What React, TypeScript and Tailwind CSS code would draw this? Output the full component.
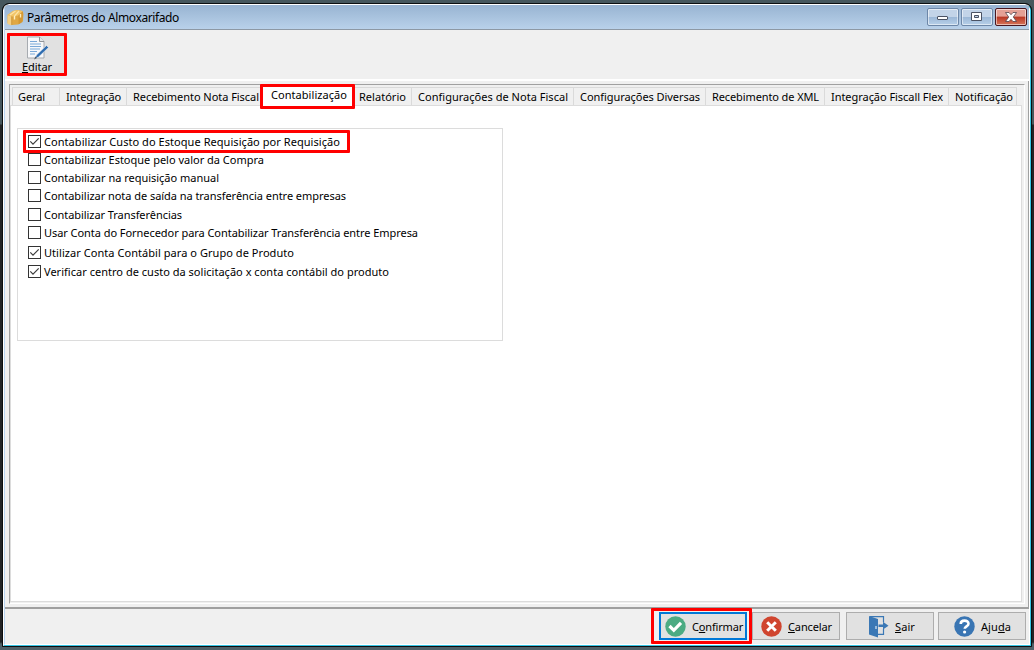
import React from "react";

type Tab = { label: string; box: string; text: string; active?: boolean };

const tabs: Tab[] = [
  { label: "Geral", box: "w-[48px] border-l pl-[5px]", text: "w-[27px]" },
  { label: "Integração", box: "w-[67px] pl-[6px]", text: "w-[55px]" },
  { label: "Recebimento Nota Fiscal", box: "w-[134px] pl-[6px]", text: "w-[126px]" },
  { label: "Contabilização", box: "w-[95px] pl-[8px]", text: "w-[76px]", active: true },
  { label: "Relatório", box: "w-[58px] pl-[5px]", text: "w-[47px]" },
  { label: "Configurações de Nota Fiscal", box: "w-[162px] pl-[6px]", text: "w-[150px]" },
  { label: "Configurações Diversas", box: "w-[132px] pl-[6px]", text: "w-[120px]" },
  { label: "Recebimento de XML", box: "w-[119px] pl-[6px]", text: "w-[107px]" },
  { label: "Integração Fiscall Flex", box: "w-[124px] pl-[6px]", text: "w-[112px]" },
  { label: "Notificação", box: "w-[68px] pl-[6px]", text: "w-[58px]" },
];

const options = [
  { label: "Contabilizar Custo do Estoque Requisição por Requisição", on: true, row: "h-[18px]", text: "w-[296px]" },
  { label: "Contabilizar Estoque pelo valor da Compra", on: false, row: "h-[18px]", text: "w-[220px]" },
  { label: "Contabilizar na requisição manual", on: false, row: "h-[18px]", text: "w-[175px]" },
  { label: "Contabilizar nota de saída na transferência entre empresas", on: false, row: "h-[19px]", text: "w-[302px]" },
  { label: "Contabilizar Transferências", on: false, row: "h-[18px]", text: "w-[138px]" },
  { label: "Usar Conta do Fornecedor para Contabilizar Transferência entre Empresa", on: false, row: "h-[20px]", text: "w-[374px]" },
  { label: "Utilizar Conta Contábil para o Grupo de Produto", on: true, row: "h-[19px]", text: "w-[250px]" },
  { label: "Verificar centro de custo da solicitação x conta contábil do produto", on: true, row: "h-[18px]", text: "w-[345px]" },
];

/* Label whose letter spacing is adjusted so that it fills the width of its box. */
function Fit({ children, className }: { children: React.ReactNode; className: string }) {
  const ref = React.useRef<HTMLSpanElement>(null);
  const [spacing, setSpacing] = React.useState(0);
  React.useLayoutEffect(() => {
    const el = ref.current;
    if (!el || !el.parentElement) return;
    const natural = el.getBoundingClientRect().width;
    const count = (el.textContent || "").length;
    setSpacing((el.parentElement.clientWidth - natural) / count);
  }, []);
  return (
    <span className={`block shrink-0 text-left whitespace-nowrap ${className}`}>
      <span ref={ref} className="inline-block" style={{ letterSpacing: `${spacing}px` }}>
        {children}
      </span>
    </span>
  );
}

function BoxIcon() {
  return (
    <svg className="h-[17px] w-[17px] shrink-0" viewBox="0 0 17 17">
      <path d="M.5 6 6 2l4-1 5.500 1 1 3-.5 7-5 3.500-6 .5-4.500-2Z" fill="#e0a844" />
      <path d="M.5 6 6 2l4-1 5.500 1-4 4.500L5 7.500Z" fill="#f2c467" />
      <path d="m.5 6 4 1.500v9L.5 15Z" fill="#f5cf82" />
      <path d="m11.500 6.500 4.500-4-.5 10.500-4 2.500Z" fill="#d39733" />
      <path d="m3 6 5.500-4M7.500 7 12 2" fill="none" stroke="#fbe3a6" strokeWidth="1.200" />
      <path d="M7.500 7v3.500M13.500 5v3.500" stroke="#fff0c0" strokeWidth="1.400" />
      <path d="M4.700 7.500V16" stroke="#c08a30" strokeWidth=".6" />
    </svg>
  );
}

function EditIcon() {
  return (
    <svg className="h-[24px] w-[24px] shrink-0" viewBox="0 0 24 24">
      <path d="M2.500 1h12l4.500 4.500v16.500H2.500Z" fill="#f7f8fa" stroke="#a7abb0" />
      <path d="M14.500 1v4.500h4.500" fill="#e4e7ea" stroke="#8f9499" />
      <path d="M5 5.500h7M5 8h11M5 10.500h11M5 13h10M5 15.500h7M5 18h5" stroke="#7aa9d8" strokeWidth="1.200" />
      <path d="m10 22.500 1.500-3.500 10-9.500 2 2-10 9.500Z" fill="#2f6db0" stroke="#f2f5f8" strokeWidth=".5" />
      <path d="m9 23.500 1.500-3 1.500 1.500Z" fill="#44525f" />
    </svg>
  );
}

function CheckBox({ on }: { on: boolean }) {
  return (
    <span className="flex h-[13px] w-[13px] shrink-0 border border-[#333] bg-white">
      {on && (
        <svg className="h-[11px] w-[11px]" viewBox="0 0 11 11">
          <path d="m1.300 5.300 2.700 2.800 5.700-5.700" fill="none" stroke="#3b3b3b" strokeWidth="1.200" />
        </svg>
      )}
    </span>
  );
}

function ConfirmIcon() {
  return (
    <svg className="h-[21px] w-[21px] shrink-0" viewBox="0 0 21 21">
      <circle cx="10.500" cy="10.500" r="10.200" fill="#4bab83" />
      <path d="m4.500 10 4.300 4.300 7.200-7.500" fill="none" stroke="#fff" strokeWidth="3.200" />
    </svg>
  );
}

function CancelIcon() {
  return (
    <svg className="h-[21px] w-[21px] shrink-0" viewBox="0 0 21 21">
      <circle cx="10.500" cy="10.500" r="10.200" fill="#d0452f" />
      <path d="m6.200 6.200 8.600 8.600m0-8.600-8.600 8.600" fill="none" stroke="#fff" strokeWidth="3" />
    </svg>
  );
}

function ExitIcon() {
  return (
    <svg className="h-[23px] w-[21px] shrink-0" viewBox="0 0 21 23">
      <path d="M2 1.700h13.500V7M15.500 14v5.300H10" fill="none" stroke="#3b78b5" strokeWidth="1.200" />
      <path d="m1 1 9 3v18.500L1 19.500Z" fill="#3b78b5" />
      <path d="M8 11v3" stroke="#fff" strokeWidth="1" />
      <path d="M10.500 9.500H15V6.800l5.500 3.900-5.500 3.900v-2.700h-4.500Z" fill="#3b78b5" />
    </svg>
  );
}

function HelpIcon() {
  return (
    <svg className="h-[21px] w-[21px] shrink-0" viewBox="0 0 21 21">
      <circle cx="10.500" cy="10.500" r="10.200" fill="#3975b3" />
      <path d="M6.700 8c0-4.500 7.800-4.300 7.800-.3 0 2.600-3.800 2.700-3.800 5" fill="none" stroke="#fff" strokeWidth="2.600" />
      <circle cx="10.600" cy="16" r="1.600" fill="#fff" />
    </svg>
  );
}

const caption = "flex h-[18px] w-[32px] items-center justify-center rounded-[2px] border shadow-[inset_0_0_0_1px_#ffffff88]";
const button = "mt-[3px] flex h-[28px] w-[88px] shrink-0 items-center border border-[#adadad] bg-[#e1e1e1]";

export default function App() {
  return (
    <div className="h-[650px] w-[1034px] overflow-hidden bg-[linear-gradient(#46575d_0px,#46575d_124px,#222426_125px,#222426_642px,#4f6068_644px)] pt-[3px] pl-[2px] font-['Noto_Sans',sans-serif] text-[11px] leading-[14px] text-black">
      <div className="h-[644px] w-[1030px] overflow-hidden rounded-t-[7px] border border-[#0c0f10] bg-[#0c0f10]">
        <div className="h-[642px] w-[1028px] overflow-hidden rounded-t-[6px] border border-t-white border-r-[#35c5e5] border-b-[#35c5e5] border-l-white">
          <div className="flex h-[640px] w-[1026px] flex-col border-r border-b border-l border-r-white border-b-white border-l-[#b9d4f0] bg-[#f0f0f0]">
            <header className="flex h-[25px] shrink-0 items-center border-b border-[#8d98a4] bg-[linear-gradient(#98b4d2,#b9d1ea)] pl-[2px]">
              <BoxIcon />
              <Fit className="ml-[3px] w-[152px] pt-px text-[12px] leading-[18px]">Parâmetros do Almoxarifado</Fit>
              <div className="mr-[2px] ml-auto flex gap-[2px] self-start pt-[3px]">
                <span className={`${caption} border-[#6d87a8] bg-[linear-gradient(#c3d4e8_48%,#9bb7d6_50%,#b7d0e9)]`}>
                  <svg className="mt-[2px] h-[6px] w-[12px]" viewBox="0 0 12 6"><rect x=".5" y="1.500" width="10" height="3" rx=".5" fill="#fff" stroke="#4b5263" /></svg>
                </span>
                <span className={`${caption} border-[#6d87a8] bg-[linear-gradient(#c3d4e8_48%,#9bb7d6_50%,#b7d0e9)]`}>
                  <svg className="h-[10px] w-[12px]" viewBox="0 0 12 10"><path fillRule="evenodd" d="M.5.5h10v8H.5Zm3 3h4v2h-4Z" fill="#fff" stroke="#4b5263" /></svg>
                </span>
                <span className={`${caption} border-[#4a1720] bg-[linear-gradient(#e4a095_45%,#b93623_50%,#d6755a)]`}>
                  <svg className="h-[10px] w-[12px]" viewBox="0 0 12 10"><path d="M.5.5h3.500L6 2.700 8 .5h3.500L8.300 5l3.200 4.500H8L6 7.300 4 9.500H.5L3.700 5Z" fill="#fff" stroke="#53424b" strokeWidth=".8" /></svg>
                </span>
              </div>
            </header>

            <div className="h-[51px] shrink-0 border-b-2 border-white pt-[3px] pl-[2px]">
              <div className="flex h-[43px] w-[60px] flex-col items-center rounded-[1px] border-[3px] border-[#f00] bg-[#e1e1e1]">
                <EditIcon />
                <Fit className="w-[30px]"><u>E</u>ditar</Fit>
              </div>
            </div>

            <div className="h-[526px] shrink-0 border-r border-[#a0a0a0] pt-[3px] pl-[4px]">
              <main className="flex h-[520px] w-[1016px] flex-col border border-t-[#a0a0a0] border-r-white border-b-white border-l-[#a0a0a0]">
                <div className="flex h-[20px] shrink-0 items-start pt-[2px] pl-[2px]">
                  {tabs.map((t) =>
                    t.active ? (
                      <div key={t.label} className={`relative z-10 -mx-px -mt-[3px] h-[25px] shrink-0 rounded-[1px] border-[3px] border-[#f00] bg-white pt-px ${t.box}`}>
                        <Fit className={t.text}>{t.label}</Fit>
                      </div>
                    ) : (
                      <div key={t.label} className={`h-[18px] shrink-0 border-t border-r border-[#dadada] pt-[2px] ${t.box}`}>
                        <Fit className={t.text}>{t.label}</Fit>
                      </div>
                    )
                  )}
                </div>
                <section className="mr-[2px] mb-px flex-1 border border-[#dcdcdc] bg-white pt-[22px] pl-[6px]">
                  <div className="h-[213px] w-[486px] border border-[#dcdcdc] pt-[6px] pl-[10px]">
                    {options.map((o, i) => (
                      <label key={o.label} className={`relative flex items-start gap-[3px] ${o.row}`}>
                        <CheckBox on={o.on} />
                        <Fit className={o.text}>{o.label}</Fit>
                        {i === 0 && <span className="absolute -top-[5px] -left-[5px] z-10 h-[23px] w-[327px] rounded-[1px] border-[3px] border-[#f00]" />}
                      </label>
                    ))}
                  </div>
                </section>
              </main>
            </div>

            <footer className="flex flex-1 border-t-2 border-[#a0a0a0]">
              <div className="ml-auto flex pr-[3px]">
                <div className="relative z-10 -mt-px flex h-[36px] w-[101px] rounded-[1px] border-[3px] border-[#f00] pt-px pl-[5px]">
                  <button className="flex h-[28px] w-[88px] shrink-0 items-center border-2 border-[#0078d7] bg-[#e1e1e1] pl-[4px]">
                    <ConfirmIcon />
                    <Fit className="ml-[6px] w-[51px] pt-[2px]">C<u>o</u>nfirmar</Fit>
                  </button>
                </div>
                <button className={`${button} pl-[8px]`}><CancelIcon /><Fit className="ml-[6px] w-[44px] pt-[2px]"><u>C</u>ancelar</Fit></button>
                <button className={`${button} ml-[6px] pl-[21px]`}><ExitIcon /><Fit className="ml-[6px] w-[20px] pt-[2px]"><u>S</u>air</Fit></button>
                <button className={`${button} ml-[4px] pl-[15px]`}><HelpIcon /><Fit className="ml-[6px] w-[30px] pt-[2px]">Aju<u>d</u>a</Fit></button>
              </div>
            </footer>
          </div>
        </div>
      </div>
    </div>
  );
}
